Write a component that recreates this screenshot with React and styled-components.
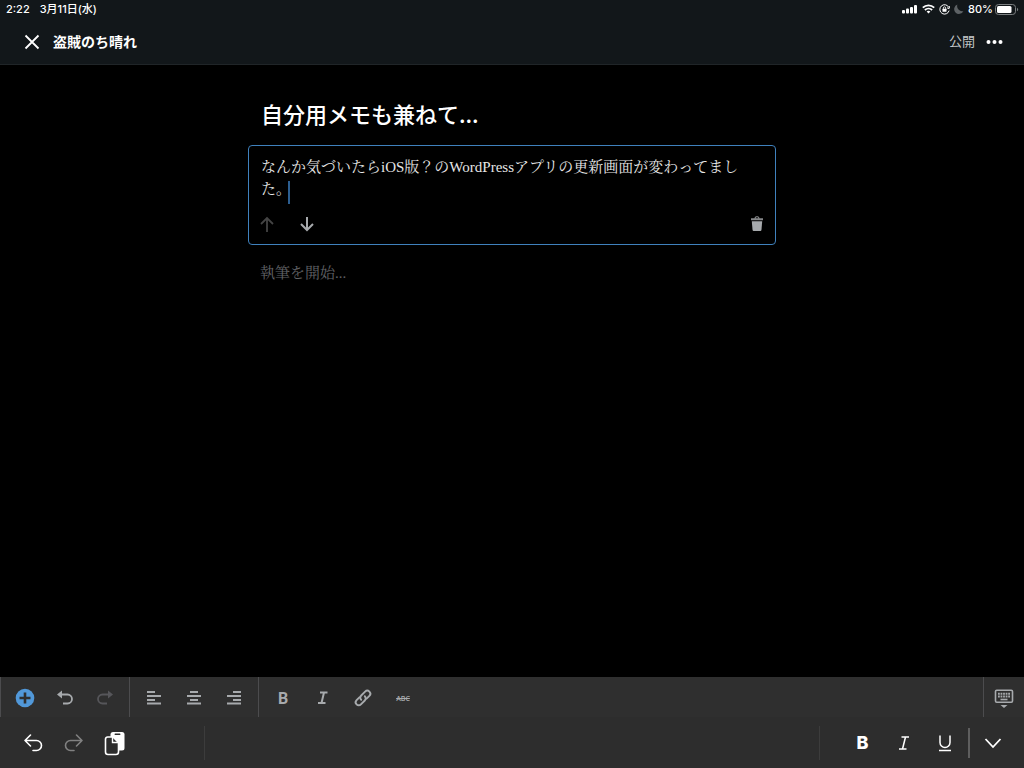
import React, { useState } from 'react';
import styled, { createGlobalStyle } from 'styled-components';

const GlobalStyle = createGlobalStyle`
  * {
    box-sizing: border-box;
  }
  body {
    margin: 0;
    background: #000;
    color: #fff;
    font-family: Roboto, 'Noto Sans CJK JP', sans-serif;
  }
  button,
  input,
  textarea {
    margin: 0;
    padding: 0;
    border: 0;
    outline: 0;
    background: none;
    color: inherit;
    font: inherit;
  }
  svg {
    display: block;
  }
`;

const Screen = styled.div`
  display: flex;
  flex-direction: column;
  min-height: 100vh;
`;

const Top = styled.header`
  background: #12171a;
  border-bottom: 1px solid #202528;
`;

const StatusBar = styled.div`
  display: flex;
  align-items: center;
  justify-content: space-between;
  height: 18px;
  padding: 0 5px 0 6px;
  font-family: Inter, 'Noto Sans CJK JP', sans-serif;
  font-size: 11px;
  font-weight: 500;
  line-height: 18px;
`;

const StatusGroup = styled.div`
  display: flex;
  align-items: center;
  gap: ${(props) => props.$gap}px;
`;

const NavBar = styled.nav`
  display: flex;
  align-items: center;
  height: 46px;
  padding: 1px 19px 0 22px;
`;

const SiteName = styled.h1`
  flex: 1;
  margin: 0 0 0 11px;
  font-size: 14px;
  font-weight: 700;
  line-height: 20px;
`;

const NavButton = styled.button`
  color: ${(props) => props.$color || '#fff'};
  font-size: 13px;
  line-height: 20px;
`;

const MoreButton = styled(NavButton)`
  margin-left: 10px;
`;

const Editor = styled.main`
  flex: 1;
  width: 100%;
  max-width: 528px;
  margin: 0 auto;
  padding-top: 32px;
`;

const TitleInput = styled.input`
  display: block;
  width: 100%;
  height: 32px;
  padding: 0 13px;
  font-family: 'Noto Sans CJK JP', sans-serif;
  font-size: 22px;
  font-weight: 500;
`;

const Block = styled.section`
  margin-top: 16px;
  padding: 10px 12px 8px;
  border: 1px solid #3f81bd;
  border-radius: 4px;
`;

const TextWrap = styled.div`
  position: relative;
`;

const serif = `
  font-family: 'Liberation Serif', 'Noto Serif CJK JP', 'Noto Sans CJK JP', serif;
  font-size: 15px;
  font-weight: 400;
  line-height: 22px;
`;

const BlockText = styled.textarea`
  ${serif}
  display: block;
  width: 100%;
  height: 44px;
  overflow: hidden;
  resize: none;
  color: #e6e6e6;
`;

const Caret = styled.span`
  position: absolute;
  top: 25px;
  left: 27px;
  width: 2px;
  height: 23px;
  background: #2c5e90;
`;

const BlockActions = styled.div`
  display: flex;
  align-items: center;
  height: 24px;
  margin-top: 12px;
`;

const BlockButton = styled.button`
  width: 12px;
  height: 24px;
  margin-right: ${(props) => (props.$last ? 0 : 28)}px;
  margin-left: ${(props) => (props.$last ? 'auto' : 0)};
  color: ${(props) => (props.disabled ? '#444' : '#a7aaad')};

  svg {
    margin: 0 -4px;
  }
`;

const NextBlock = styled.input`
  ${serif}
  display: block;
  width: 100%;
  margin-top: 17px;
  padding: 0 12px;

  &::placeholder {
    color: #606266;
    opacity: 1;
  }
`;

const BlockToolbar = styled.div`
  display: flex;
  height: 40px;
  background: #2f2f2f;
`;

const ToolGroup = styled.div`
  display: flex;
  padding: 0 4px;
  border-left: 1px solid #4c4c4e;
`;

const ToolButton = styled.button`
  display: flex;
  align-items: center;
  justify-content: center;
  width: 40px;
  height: 40px;
  padding-top: 2px;
  color: ${(props) => (props.disabled ? '#56565a' : '#a7aaad')};
  font-size: 16px;
  font-weight: 700;
`;

const HideKeyboard = styled(ToolButton)`
  width: 41px;
  margin-left: auto;
  border-left: 1px solid #4c4c4e;
`;

const Strike = styled.s`
  font-family: 'Open Sans', sans-serif;
  font-size: 7px;
  font-weight: 600;
`;

const ShortcutBar = styled.div`
  display: flex;
  align-items: center;
  justify-content: space-between;
  height: 51px;
  background: #2d2d2d;
`;

const ShortcutGroup = styled.div`
  display: flex;
  align-items: center;
  height: 34px;
  padding: ${(props) => (props.$right ? '0 11px 0 22px' : '0 69px 0 12px')};
  border-left: ${(props) => (props.$right ? '1px solid #3c3c3c' : '0')};
  border-right: ${(props) => (props.$right ? '0' : '1px solid #3c3c3c')};
`;

const ShortcutButton = styled(ToolButton)`
  width: 41px;
  padding-top: 0;
  color: ${(props) => (props.disabled ? '#818181' : '#fff')};
  font-family: Inter, sans-serif;
  font-size: 18px;
  font-weight: 800;
`;

const Separator = styled.span`
  width: 2px;
  height: 30px;
  margin: 0 2px 0 3px;
  background: #5e5e5e;
`;

function Line({ d, size = 24, weight = 2, box = size }) {
  return (
    <svg width={size} height={size} viewBox={`0 0 ${box} ${box}`} fill="none" stroke="currentColor" strokeWidth={weight}>
      <path d={d} />
    </svg>
  );
}

function SignalIcon() {
  return (
    <svg width="16" height="10" fill="#fff">
      <rect x="0" y="6" width="3" height="3.500" rx="1" />
      <rect x="4" y="4.500" width="3" height="5" rx="1" />
      <rect x="8" y="3" width="3" height="6.500" rx="1" />
      <rect x="12" y="1" width="3" height="8.500" rx="1" />
    </svg>
  );
}

function WifiIcon() {
  return (
    <svg width="13" height="10" viewBox="0 0 13 10" fill="none" stroke="#fff" strokeWidth="1.8">
      <path d="M.8 3.7a8.2 8.2 0 0 1 11.4 0M2.9 6a5.2 5.2 0 0 1 7.2 0" />
      <path d="M6.5 9.6 4.6 7.6a2.8 2.8 0 0 1 3.8 0z" fill="#fff" stroke="none" />
    </svg>
  );
}

function RotationLockIcon() {
  return (
    <svg width="11" height="11" viewBox="0 0 11 11" fill="none" stroke="#fff">
      <path d="M9.8 3.4a4.7 4.7 0 1 0 .3 3.2M10.6 2.2l-.5 2.4-2.1-.8" />
      <path d="M4.3 5V4a1.2 1.2 0 0 1 2.4 0v1" strokeWidth=".8" />
      <rect x="3.5" y="4.8" width="4" height="3" rx=".4" fill="#fff" stroke="none" />
    </svg>
  );
}

function MoonIcon() {
  return (
    <svg width="10" height="10" viewBox="0 0 10 10" fill="#5d6265">
      <path d="M3.4.6a5 5 0 0 0 6 6.4A4.8 4.8 0 1 1 3.4.6z" />
    </svg>
  );
}

function BatteryIcon() {
  return (
    <svg width="24" height="11" viewBox="0 0 24 11">
      <rect x=".5" y=".5" width="20" height="10" rx="3" fill="none" stroke="#7c8082" />
      <rect x="2" y="2" width="14.5" height="7" rx="1.5" fill="#fff" />
      <path d="M22 3.7a2 2 0 0 1 0 3.6z" fill="#7c8082" />
    </svg>
  );
}

function TrashIcon() {
  return (
    <svg width="20" height="24" viewBox="0 0 20 24" fill="currentColor">
      <path d="M4 6.200h3.500c.3-1.400 1-2 2.500-2s2.200.6 2.500 2H16v2H4zM8.700 6.200h2.600c-.2-.6-.5-.9-1.300-.9s-1.100.3-1.300.9z" opacity=".8" />
      <path d="M4.800 9.200h10.400l-.7 8.200c-.1 1-.6 1.600-1.600 1.600H7.100c-1 0-1.500-.6-1.600-1.600z" />
    </svg>
  );
}

function AddIcon() {
  return (
    <svg width="20" height="20">
      <circle cx="10" cy="10" r="9.300" fill="#5198d9" />
      <path d="M10 4.500v11M4.500 10h11" stroke="#2f2f2f" strokeWidth="2.600" />
    </svg>
  );
}

function CurvedArrow({ flip }) {
  return (
    <svg width="20" height="20" fill="none" stroke="currentColor" strokeWidth="1.800">
      <g transform={flip ? 'matrix(-1 0 0 1 20 0)' : undefined}>
        <path d="M5 6.500h7.500a4.500 4.500 0 0 1 0 9H8" />
        <path d="M7 2.500v8L2 6.500z" fill="currentColor" stroke="none" />
      </g>
    </svg>
  );
}

function ThinArrow({ flip }) {
  return (
    <svg width="20" height="20" fill="none" stroke="currentColor" strokeWidth="1.600" strokeLinecap="round" strokeLinejoin="round">
      <g transform={flip ? 'matrix(-1 0 0 1 20 0)' : undefined}>
        <path d="M7.500 2 2 7.500 7.500 13M2 7.500h11.500a5 5 0 0 1 0 10H10" />
      </g>
    </svg>
  );
}

function LinkIcon() {
  return (
    <svg width="20" height="20" viewBox="0 0 20 20" fill="none" stroke="currentColor" strokeWidth="1.900" strokeLinecap="round">
      <path d="M8.200 11.800a3 3 0 0 1 0-4.300l3.900-3.900a3 3 0 0 1 4.300 4.300l-2.800 2.800" />
      <path d="M11.800 8.200a3 3 0 0 1 0 4.300l-3.900 3.900a3 3 0 0 1-4.300-4.300l2.800-2.800" />
    </svg>
  );
}

function PasteIcon() {
  return (
    <svg width="22" height="26" viewBox="0 0 22 26">
      <rect x="6.500" y="2" width="14" height="18.500" rx="2.500" fill="#fff" />
      <rect x="10.500" y="3.500" width="6" height="1.500" rx=".7" fill="#2d2d2d" />
      <path d="M3.500 7H9l5.500 5.500V22a2.500 2.500 0 0 1-2.500 2.500H4A2.500 2.500 0 0 1 1.500 22V9a2 2 0 0 1 2-2z" fill="#2d2d2d" stroke="#fff" strokeWidth="1.600" />
      <path d="M8.500 7v5.500h5.500" fill="none" stroke="#fff" strokeWidth="1.400" />
    </svg>
  );
}

function KeyboardIcon() {
  return (
    <svg width="20" height="20" viewBox="0 0 20 20" fill="none" stroke="currentColor">
      <rect x="1.500" y="2.300" width="17" height="12" rx="1.200" strokeWidth="1.600" />
      <path d="M4 5.800h12M4 8.500h12" strokeWidth="2" strokeDasharray="1.800 .75" />
      <path d="M6.500 11.500h7" strokeWidth="1.600" />
      <path d="M6.500 17h7L10 20z" fill="currentColor" stroke="none" />
    </svg>
  );
}

export default function App() {
  const [title, setTitle] = useState('自分用メモも兼ねて...');
  const [text, setText] = useState('なんか気づいたらiOS版？のWordPressアプリの更新画面が変わってました。');

  return (
    <Screen>
      <GlobalStyle />
      <Top>
        <StatusBar>
          <StatusGroup $gap={10}>
            <span>2:22</span>
            <span>3月11日(水)</span>
          </StatusGroup>
          <StatusGroup $gap={4}>
            <SignalIcon />
            <WifiIcon />
            <RotationLockIcon />
            <MoonIcon />
            <StatusGroup $gap={2}>
              <span>80%</span>
              <BatteryIcon />
            </StatusGroup>
          </StatusGroup>
        </StatusBar>
        <NavBar>
          <NavButton aria-label="閉じる">
            <Line size={20} weight={1.8} d="M3.500 3.500l13 13M16.500 3.500l-13 13" />
          </NavButton>
          <SiteName>盗賊のち晴れ</SiteName>
          <NavButton $color="#c4c7c9">公開</NavButton>
          <MoreButton aria-label="その他">
            <svg width="20" height="20" fill="currentColor">
              <circle cx="3.500" cy="10" r="2" />
              <circle cx="9.500" cy="10" r="2" />
              <circle cx="15.500" cy="10" r="2" />
            </svg>
          </MoreButton>
        </NavBar>
      </Top>

      <Editor>
        <TitleInput aria-label="タイトル" value={title} onChange={(e) => setTitle(e.target.value)} />
        <Block>
          <TextWrap>
            <BlockText aria-label="段落" spellCheck={false} value={text} onChange={(e) => setText(e.target.value)} />
            <Caret />
          </TextWrap>
          <BlockActions>
            <BlockButton disabled aria-label="上に移動">
              <Line size={20} d="M10 18V4M4 10l6-6 6 6" weight={1.8} />
            </BlockButton>
            <BlockButton aria-label="下に移動">
              <Line size={20} d="M10 3v13M4 10l6 6 6-6" weight={2} />
            </BlockButton>
            <BlockButton $last aria-label="削除">
              <TrashIcon />
            </BlockButton>
          </BlockActions>
        </Block>
        <NextBlock aria-label="新しい段落" placeholder="執筆を開始..." />
      </Editor>

      <BlockToolbar>
        <ToolGroup>
          <ToolButton aria-label="ブロックを追加"><AddIcon /></ToolButton>
          <ToolButton aria-label="元に戻す"><CurvedArrow /></ToolButton>
          <ToolButton disabled aria-label="やり直す"><CurvedArrow flip /></ToolButton>
        </ToolGroup>
        <ToolGroup>
          <ToolButton aria-label="左寄せ"><Line size={20} weight={1.8} d="M3 4h8M3 8h14M3 12h8M3 15.500h14" /></ToolButton>
          <ToolButton aria-label="中央寄せ"><Line size={20} weight={1.8} d="M6 4h8M3 8h14M6 12h8M3 15.500h14" /></ToolButton>
          <ToolButton aria-label="右寄せ"><Line size={20} weight={1.8} d="M9 4h8M3 8h14M9 12h8M3 15.500h14" /></ToolButton>
        </ToolGroup>
        <ToolGroup>
          <ToolButton aria-label="太字">B</ToolButton>
          <ToolButton aria-label="イタリック"><Line size={20} d="M7 4.500h7.500M5 15h7.500M11 4.500l-2.500 10.500" /></ToolButton>
          <ToolButton aria-label="リンク"><LinkIcon /></ToolButton>
          <ToolButton aria-label="取り消し線"><Strike>ABC</Strike></ToolButton>
        </ToolGroup>
        <HideKeyboard aria-label="キーボードを隠す"><KeyboardIcon /></HideKeyboard>
      </BlockToolbar>

      <ShortcutBar>
        <ShortcutGroup>
          <ShortcutButton aria-label="取り消す"><ThinArrow /></ShortcutButton>
          <ShortcutButton disabled aria-label="やり直す"><ThinArrow flip /></ShortcutButton>
          <ShortcutButton aria-label="ペースト"><PasteIcon /></ShortcutButton>
        </ShortcutGroup>
        <ShortcutGroup $right>
          <ShortcutButton aria-label="太字">B</ShortcutButton>
          <ShortcutButton aria-label="斜体"><Line size={20} d="M7.500 4h7.500M5 16h7.500M11.500 4l-3 12" weight={1.500} /></ShortcutButton>
          <ShortcutButton aria-label="下線"><Line size={20} d="M5 2.500v7a4.800 4.800 0 0 0 10 0v-7M4 17.500h12" weight={1.500} /></ShortcutButton>
          <Separator />
          <ShortcutButton aria-label="閉じる"><Line size={20} d="M2.500 6l7.500 8 7.500-8" weight={1.800} /></ShortcutButton>
        </ShortcutGroup>
      </ShortcutBar>
    </Screen>
  );
}
